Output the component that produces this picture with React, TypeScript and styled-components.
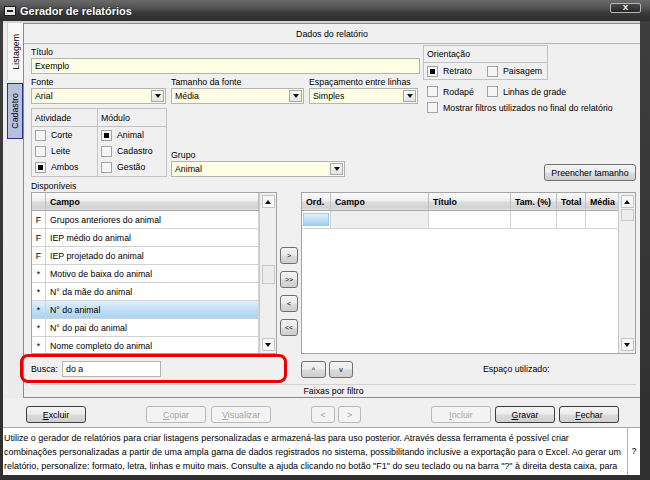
import React from 'react';
import styled, { createGlobalStyle, css } from 'styled-components';

const GlobalStyle = createGlobalStyle`
  html, body { margin: 0; padding: 0; background: #333; }
  body { font-family: "Liberation Sans", Arial, sans-serif; font-size: 8.8px; color: #000; }
  * { box-sizing: border-box; }
`;

const Window = styled.div`
  width: 650px; height: 480px; overflow: hidden;
  background: linear-gradient(180deg, #3e3e3e, #2f2f2f);
  display: flex; flex-direction: column;
`;

const TitleBar = styled.div`
  height: 21px; flex: none; display: flex; align-items: center;
  padding-left: 4px;
  background: linear-gradient(#6a6a6a, #505050 40%, #3a3a3a 60%, #2e2e2e);
`;

const SysIcon = styled.div`
  width: 12px; height: 10px; background: #e4e4e4; border: 1px solid #1a1a1a;
  display: flex; align-items: center; justify-content: center;
  &::after { content: ''; width: 6px; height: 2px; background: #222; }
`;

const Title = styled.div`
  margin-left: 4px; color: #fff; font-weight: bold; font-size: 11px;
  text-shadow: 0 0 2px #000;
`;

const CloseBtn = styled.div`
  margin-left: auto; margin-right: 9px; align-self: flex-start; margin-top: 3px;
  width: 31px; height: 10px; border: 1px solid #b8b8b8; border-radius: 2px;
  background: linear-gradient(#4a4a4a, #262626);
  color: #fff; font-weight: bold; font-size: 8px; line-height: 8px; text-align: center;
`;

const Client = styled.div`
  flex: 1; margin: 0 10px 5px 3px; background: #f0f0f0;
  border-top: 2px solid #d4d4d4;
  display: flex; flex-direction: column;
`;

const TopArea = styled.div`
  height: 375px; flex: none; display: flex;
`;

const TabStrip = styled.div`
  width: 20px; flex: none; display: flex; flex-direction: column; align-items: flex-end;
  background: #ececec;
`;

const Tab = styled.div<{ $active?: boolean; $h: number }>`
  width: 16px; height: ${p => p.$h}px; display: flex; align-items: center; justify-content: center;
  ${p => p.$active
    ? css`background: #f7f7f7; border-left: 1px solid #d0d0d0;`
    : css`background: #b8c0e2; border: 1px solid #25338c; margin-top: 3px; margin-right: 0;`}
`;

const TabText = styled.span`
  writing-mode: vertical-rl; transform: rotate(180deg); white-space: nowrap;
`;

const MainPanel = styled.div`
  flex: 1; display: flex; flex-direction: column;
  border: 1px solid #8a8a8a; border-right: none;
`;

const PanelHeader = styled.div`
  height: 20px; flex: none; border-bottom: 1px solid #b4b4b4;
  display: flex; align-items: center; justify-content: center;
`;

const Content = styled.div`
  flex: 1; padding: 1px 4px 0 7px; display: flex; flex-direction: column;
`;

const TopSection = styled.div`
  height: 136px; flex: none; display: flex;
`;

const LeftBlock = styled.div`
  width: 389px; flex: none; display: flex; flex-direction: column;
`;

const RightBlock = styled.div`
  flex: 1; margin-left: 3px; display: flex; flex-direction: column;
`;

const Label = styled.div<{ $h?: number }>`
  height: ${p => p.$h ?? 11}px; display: flex; align-items: flex-end; white-space: nowrap;
  line-height: 11px;
`;

const TextBox = styled.div<{ $w?: number; $bg?: string }>`
  height: 16px; ${p => p.$w ? css`width: ${p.$w}px;` : ''}
  background: ${p => p.$bg ?? '#fffde3'}; border: 1px solid #b4b4b4;
  display: flex; align-items: center; padding-left: 3px; position: relative;
  white-space: nowrap;
`;

const DropBtn = styled.div`
  position: absolute; right: 1px; top: 1px; width: 13px; height: 12px;
  border: 1px solid #a8a8a8; background: linear-gradient(#fbfbfb, #e2e2e2);
  display: flex; align-items: center; justify-content: center;
  &::after { content: ''; border-left: 3px solid transparent; border-right: 3px solid transparent; border-top: 4px solid #111; }
`;

const Field = styled.div<{ $w: number; $ml?: number }>`
  width: ${p => p.$w}px; margin-left: ${p => p.$ml ?? 0}px; display: flex; flex-direction: column;
`;

const Row = styled.div<{ $mt?: number; $align?: string }>`
  display: flex; margin-top: ${p => p.$mt ?? 0}px; align-items: ${p => p.$align ?? 'stretch'};
`;

const Group = styled.div<{ $w: number; $h: number }>`
  width: ${p => p.$w}px; height: ${p => p.$h}px; border: 1px solid #c2c2c2; display: flex;
`;

const GroupCol = styled.div<{ $w?: number; $last?: boolean }>`
  ${p => p.$w ? css`width: ${p.$w}px;` : css`flex: 1;`}
  ${p => !p.$last && css`border-right: 1px solid #c2c2c2;`}
  display: flex; flex-direction: column;
`;

const GroupHead = styled.div`
  height: 18px; border-bottom: 1px solid #c2c2c2; display: flex; align-items: center; padding-left: 3px;
`;

const CheckLine = styled.div<{ $h?: number; $pl?: number; $mt?: number }>`
  height: ${p => p.$h ?? 16}px; display: flex; align-items: center; padding-left: ${p => p.$pl ?? 3}px;
  margin-top: ${p => p.$mt ?? 0}px; white-space: nowrap;
`;

const Box = styled.div<{ $checked?: boolean }>`
  width: 11px; height: 11px; flex: none; border: 1px solid #a3a3a3; background: #f5f5f5;
  display: flex; align-items: center; justify-content: center; margin-right: 5px;
  ${p => p.$checked && css`&::after { content: ''; width: 5px; height: 5px; background: #000; }`}
`;

const CheckText = styled.span<{ $w?: number }>`
  ${p => p.$w && css`width: ${p.$w}px; display: inline-block;`}
`;

const Check = ({ checked, label, gapAfter }: { checked?: boolean; label: string; gapAfter?: number }) => (
  <>
    <Box $checked={checked} />
    <CheckText $w={gapAfter}>{label}</CheckText>
  </>
);

const Button = styled.div<{ $w: number; $ml?: number; $disabled?: boolean; $focus?: boolean }>`
  width: ${p => p.$w}px; height: 17px; margin-left: ${p => p.$ml ?? 0}px; flex: none;
  border-radius: 3px; display: flex; align-items: center; justify-content: center; white-space: nowrap;
  ${p => p.$disabled
    ? css`border: 1px solid #b5b9bc; background: #f4f4f4; color: #a4a4a4;`
    : css`border: 1px solid ${p.$focus ? '#3e3e3e' : '#707070'};
         background: linear-gradient(#f4f4f4, #ebebeb 48%, #dcdcdc 52%, #cfcfcf);`}
`;

const FillButton = styled(Button)`
  margin-top: auto; align-self: flex-end;
`;

const SmallBtn = styled(Button)`
  font-size: 7px; height: 17px;
`;

const GridSection = styled.div`
  height: 162px; flex: none; display: flex;
`;

const GridBox = styled.div<{ $w: number }>`
  width: ${p => p.$w}px; flex: none; border: 1px solid #a4a4a4; display: flex; background: #fff;
  overflow: hidden;
`;

const Table = styled.div<{ $cols: string }>`
  flex: 1; display: grid; grid-template-columns: ${p => p.$cols}; grid-auto-rows: 18px;
  align-content: start; overflow: hidden; border-right: 1px solid #c8c8c8;
`;

const HeadCell = styled.div`
  background: linear-gradient(#fbfbfb, #ededed 45%, #dcdcdc 55%, #d2d2d2 88%, #e4e4e4);
  border-right: 1px solid #c0c0c0; border-bottom: 1px solid #a8a8a8;
  font-weight: bold; display: flex; align-items: center; padding-left: 4px; white-space: nowrap;
`;

const Cell = styled.div<{ $sel?: boolean; $center?: boolean; $bg?: string; $pad?: boolean }>`
  border-right: 1px solid #d2d2d2; border-bottom: 1px solid #d2d2d2;
  display: flex; align-items: center; white-space: nowrap; overflow: hidden;
  padding-left: ${p => p.$center ? 0 : 4}px; justify-content: ${p => p.$center ? 'center' : 'flex-start'};
  ${p => p.$pad && css`padding-top: 2px; padding-bottom: 2px;`}
  background: ${p => p.$sel ? 'linear-gradient(#e2f0fb, #c2e0f6 50%, #a9d3f1)' : (p.$bg ?? '#fff')};
`;

const SelBlock = styled.div`
  width: 100%; height: 100%; margin: 0 1px;
  background: linear-gradient(#e2f0fb, #c2e0f6 50%, #9fcdef);
  border: 1px solid #9ccbee;
`;

const Scroll = styled.div`
  width: 16px; flex: none; display: flex; flex-direction: column; align-items: center;
  background: #efefef; padding: 2px 0;
`;

const ScrollBtn = styled.div<{ $down?: boolean }>`
  width: 13px; height: 13px; flex: none; border: 1px solid #c6c6c6; background: #f6f6f6;
  display: flex; align-items: center; justify-content: center;
  ${p => p.$down && css`margin-top: auto;`}
  &::after {
    content: ''; border-left: 3px solid transparent; border-right: 3px solid transparent;
    ${p => p.$down ? css`border-top: 4px solid #111;` : css`border-bottom: 4px solid #111;`}
  }
`;

const Thumb = styled.div<{ $top: number; $h: number }>`
  width: 13px; flex: none; margin-top: ${p => p.$top}px; height: ${p => p.$h}px;
  border: 1px solid #c8c8c8; background: #ececec;
`;

const TransferCol = styled.div`
  width: 24px; flex: none; display: flex; flex-direction: column; align-items: center;
  padding-top: 55px; gap: 7px;
`;

const BuscaRow = styled.div`
  height: 30px; flex: none; display: flex; align-items: center;
`;

const RedBox = styled.div`
  margin-left: -11px; width: 267px; height: 29px; align-self: flex-start;
  border: 3px solid #e80000; border-radius: 8px;
  display: flex; align-items: center; padding-left: 8px;
`;

const BuscaLabel = styled.div`
  width: 31px;
`;

const SpaceUsed = styled.span`
  margin-left: 130px;
`;

const Faixas = styled.div`
  height: 13px; flex: none; border-top: 1px solid #d2d2d2;
  display: flex; align-items: center; justify-content: center;
`;

const ButtonRow = styled.div`
  height: 29px; flex: none; display: flex; align-items: flex-start; padding-top: 8px;
`;

const HelpRow = styled.div`
  flex: 1; display: flex; border-top: 1px solid #a8a8a8; background: #fff;
`;

const HelpText = styled.div`
  width: 624px; padding: 3px 0 0 1px; line-height: 14px; overflow: hidden; font-size: 8.95px;
`;

const HelpLine = styled.div`
  white-space: nowrap;
`;

const HelpQ = styled.div`
  flex: 1; border-left: 1px solid #b4b4b4; display: flex; align-items: center; justify-content: center;
  padding-bottom: 2px;
`;

const U = styled.span`text-decoration: underline;`;

const leftRows: [string, string, boolean?][] = [
  ['F', 'Grupos anteriores do animal'],
  ['F', 'IEP médio do animal'],
  ['F', 'IEP projetado do animal'],
  ['*', 'Motivo de baixa do animal'],
  ['*', 'N° da mãe do animal'],
  ['*', 'N° do animal', true],
  ['*', 'N° do pai do animal'],
  ['*', 'Nome completo do animal'],
];

export default function App() {
  return (
    <>
      <GlobalStyle />
      <Window>
        <TitleBar>
          <SysIcon />
          <Title>Gerador de relatórios</Title>
          <CloseBtn>X</CloseBtn>
        </TitleBar>
        <Client>
          <TopArea>
            <TabStrip>
              <Tab $active $h={57}><TabText>Listagem</TabText></Tab>
              <Tab $h={56}><TabText>Cadastro</TabText></Tab>
            </TabStrip>
            <MainPanel>
              <PanelHeader>Dados do relatório</PanelHeader>
              <Content>
                <TopSection>
                  <LeftBlock>
                    <Label $h={13}>Título</Label>
                    <TextBox>Exemplo</TextBox>
                    <Row $mt={3}>
                      <Field $w={135}>
                        <Label>Fonte</Label>
                        <TextBox>Arial<DropBtn /></TextBox>
                      </Field>
                      <Field $w={133} $ml={5}>
                        <Label>Tamanho da fonte</Label>
                        <TextBox>Média<DropBtn /></TextBox>
                      </Field>
                      <Field $w={109} $ml={5}>
                        <Label>Espaçamento entre linhas</Label>
                        <TextBox>Simples<DropBtn /></TextBox>
                      </Field>
                    </Row>
                    <Row $mt={4} $align="flex-end">
                      <Group $w={136} $h={69}>
                        <GroupCol $w={66}>
                          <GroupHead>Atividade</GroupHead>
                          <CheckLine><Check label="Corte" /></CheckLine>
                          <CheckLine><Check label="Leite" /></CheckLine>
                          <CheckLine><Check checked label="Ambos" /></CheckLine>
                        </GroupCol>
                        <GroupCol $last>
                          <GroupHead>Módulo</GroupHead>
                          <CheckLine><Check checked label="Animal" /></CheckLine>
                          <CheckLine><Check label="Cadastro" /></CheckLine>
                          <CheckLine><Check label="Gestão" /></CheckLine>
                        </GroupCol>
                      </Group>
                      <Field $w={174} $ml={4}>
                        <Label>Grupo</Label>
                        <TextBox>Animal<DropBtn /></TextBox>
                      </Field>
                    </Row>
                  </LeftBlock>
                  <RightBlock>
                    <Group $w={125} $h={35}>
                      <GroupCol $last>
                        <GroupHead>Orientação</GroupHead>
                        <CheckLine $h={16}>
                          <Check checked label="Retrato" gapAfter={44} />
                          <Check label="Paisagem" />
                        </CheckLine>
                      </GroupCol>
                    </Group>
                    <CheckLine $h={11} $pl={4} $mt={6}>
                      <Check label="Rodapé" gapAfter={44} />
                      <Check label="Linhas de grade" />
                    </CheckLine>
                    <CheckLine $h={11} $pl={4} $mt={5}>
                      <Check label="Mostrar filtros utilizados no final do relatório" />
                    </CheckLine>
                    <FillButton $w={92}>Preencher tamanho</FillButton>
                  </RightBlock>
                </TopSection>
                <Label>Disponíveis</Label>
                <GridSection>
                  <GridBox $w={246}>
                    <Table $cols="14px 1fr">
                      <HeadCell />
                      <HeadCell>Campo</HeadCell>
                      {leftRows.map(([k, v, sel], i) => (
                        <React.Fragment key={i}>
                          <Cell $center $sel={sel}>{k}</Cell>
                          <Cell $sel={sel}>{v}</Cell>
                        </React.Fragment>
                      ))}
                    </Table>
                    <Scroll>
                      <ScrollBtn />
                      <Thumb $top={57} $h={19} />
                      <ScrollBtn $down />
                    </Scroll>
                  </GridBox>
                  <TransferCol>
                    <SmallBtn $w={18}>&gt;</SmallBtn>
                    <SmallBtn $w={18}>&gt;&gt;</SmallBtn>
                    <SmallBtn $w={18}>&lt;</SmallBtn>
                    <SmallBtn $w={18}>&lt;&lt;</SmallBtn>
                  </TransferCol>
                  <GridBox $w={335}>
                    <Table $cols="29px 98px 82px 46px 29px 33px">
                      <HeadCell>Ord.</HeadCell>
                      <HeadCell>Campo</HeadCell>
                      <HeadCell>Título</HeadCell>
                      <HeadCell>Tam. (%)</HeadCell>
                      <HeadCell>Total</HeadCell>
                      <HeadCell>Média</HeadCell>
                      <Cell $center $pad><SelBlock /></Cell>
                      <Cell $bg="#eeeeee" />
                      <Cell />
                      <Cell />
                      <Cell />
                      <Cell />
                    </Table>
                    <Scroll>
                      <ScrollBtn />
                      <Thumb $top={1} $h={12} />
                      <ScrollBtn $down />
                    </Scroll>
                  </GridBox>
                </GridSection>
                <BuscaRow>
                  <RedBox>
                    <BuscaLabel>Busca:</BuscaLabel>
                    <TextBox $w={99} $bg="#fff">do a</TextBox>
                  </RedBox>
                  <SmallBtn $w={25} $ml={14}>^</SmallBtn>
                  <SmallBtn $w={24} $ml={3}>v</SmallBtn>
                  <SpaceUsed>Espaço utilizado:</SpaceUsed>
                </BuscaRow>
                <Faixas>Faixas por filtro</Faixas>
              </Content>
            </MainPanel>
          </TopArea>
          <ButtonRow>
            <Button $w={60} $ml={23} $focus><U>E</U>xcluir</Button>
            <Button $w={60} $ml={60} $disabled><U>C</U>opiar</Button>
            <Button $w={60} $ml={5} $disabled><U>V</U>isualizar</Button>
            <Button $w={24} $ml={40} $disabled>&lt;</Button>
            <Button $w={23} $ml={3} $disabled>&gt;</Button>
            <Button $w={60} $ml={70} $disabled><U>I</U>ncluir</Button>
            <Button $w={60} $ml={4} $focus><U>G</U>ravar</Button>
            <Button $w={60} $ml={4} $focus><U>F</U>echar</Button>
          </ButtonRow>
          <HelpRow>
            <HelpText>
              <HelpLine>Utilize o gerador de relatórios para criar listagens personalizadas e armazená-las para uso posterior. Através dessa ferramenta é possível criar</HelpLine>
              <HelpLine>combinações personalizadas a partir de uma ampla gama de dados registrados no sistema, possibilitando inclusive a exportação para o Excel. Ao gerar um</HelpLine>
              <HelpLine>relatório, personalize: formato, letra, linhas e muito mais. Consulte a ajuda clicando no botão "F1" do seu teclado ou na barra "?" à direita desta caixa, para</HelpLine>
            </HelpText>
            <HelpQ>?</HelpQ>
          </HelpRow>
        </Client>
      </Window>
    </>
  );
}
